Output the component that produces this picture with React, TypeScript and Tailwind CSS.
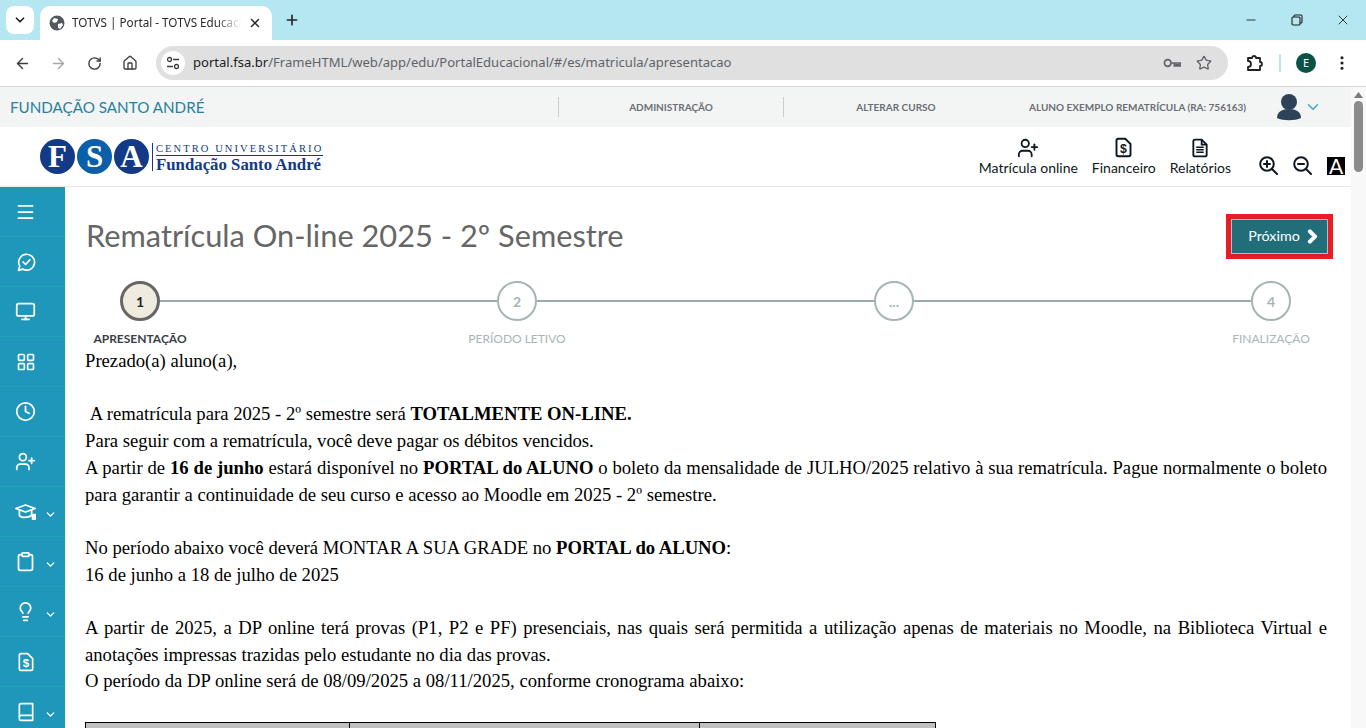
import { ArrowLeft, ArrowRight, ChevronDown, Clipboard, Clock, EllipsisVertical, House, LayoutGrid, Lightbulb, Menu, Minus, Monitor, Plus, RotateCw, Star, UserPlus, X } from 'lucide-react';
import { FaChevronRight } from 'react-icons/fa';
import type { ReactNode } from 'react';

const ui = "font-['Noto_Sans',sans-serif]";
const nun = "font-['Lato',sans-serif]";

function DollarFile({ size = 20, sw = 2 }: { size?: number; sw?: number }) {
  return (
    <svg width={size} height={size} viewBox="0 0 24 24" fill="none" stroke="currentColor" strokeWidth={sw} strokeLinejoin="round">
      <path d="M6 2h8l6 6v12a2 2 0 0 1-2 2H6a2 2 0 0 1-2-2V4a2 2 0 0 1 2-2z" />
      <text x="12" y="18" textAnchor="middle" fontSize="14" fontWeight="700" fill="currentColor" stroke="none" fontFamily="Liberation Sans">$</text>
    </svg>
  );
}

function ReportFile() {
  return (
    <svg width="20" height="20" viewBox="0 0 24 24" fill="none" stroke="currentColor" strokeWidth="2.200" strokeLinejoin="round">
      <path d="M6 2h8l6 6v12a2 2 0 0 1-2 2H6a2 2 0 0 1-2-2V4a2 2 0 0 1 2-2z" />
      <path d="M14 2v6h6" />
      <path d="M7.500 11h9M7.500 14h9M7.500 17h9" strokeWidth="1.800" />
    </svg>
  );
}

function ZoomGlass({ sign }: { sign: 'plus' | 'minus' }) {
  return (
    <svg width="19" height="19" viewBox="0 0 19 19" fill="none" stroke="currentColor" strokeWidth="2" strokeLinecap="round">
      <circle cx="8" cy="8" r="6.800" />
      <path d="M13 13l5 5" />
      <path d="M5 8h6" />
      {sign === 'plus' && <path d="M8 5v6" />}
    </svg>
  );
}

function MessageCheck() {
  return (
    <svg width="20" height="20" viewBox="0 0 24 24" fill="none" stroke="currentColor" strokeWidth="2" strokeLinecap="round" strokeLinejoin="round">
      <path d="M3 22l1.500-5A9.500 9.500 0 1 1 8 20.500z" />
      <path d="M8.500 12l3 3 5-5.500" />
    </svg>
  );
}

function GradCap() {
  return (
    <svg width="22" height="20" viewBox="0 0 24 22" fill="none" stroke="currentColor" strokeWidth="2" strokeLinejoin="round">
      <path d="M1 7l11-4 11 4-11 4z" />
      <path d="M5 9v6c2 3 10 3 14 0V9" />
      <path d="M20 14h3v5h-3z" fill="currentColor" />
    </svg>
  );
}

function SideBook() {
  return (
    <svg width="20" height="20" viewBox="0 0 24 24" fill="none" stroke="currentColor" strokeWidth="2" strokeLinejoin="round">
      <path d="M6 2h14v20H6a2 2 0 0 1-2-2V4a2 2 0 0 1 2-2z" />
      <path d="M4 18a2 2 0 0 1 2-2h14" />
    </svg>
  );
}

const sideItems: { icon: ReactNode; more?: boolean }[] = [
  { icon: <Menu size={22} strokeWidth={2} /> },
  { icon: <MessageCheck /> },
  { icon: <Monitor size={21} strokeWidth={2} /> },
  { icon: <LayoutGrid size={20} strokeWidth={2} /> },
  { icon: <Clock size={21} strokeWidth={2} /> },
  { icon: <UserPlus size={21} strokeWidth={2} /> },
  { icon: <GradCap />, more: true },
  { icon: <Clipboard size={21} strokeWidth={2} />, more: true },
  { icon: <Lightbulb size={23} strokeWidth={2} />, more: true },
  { icon: <DollarFile /> },
  { icon: <SideBook />, more: true },
];

function Sidebar() {
  return (
    <aside className="w-[65px] shrink-0 bg-[#1f97bb] text-white">
      {sideItems.map((item, i) => (
        <div key={i} className="relative flex h-[50px] items-center border-b border-[#1fa3b5] pl-[15px]">
          <span className="flex w-[21px] justify-center">{item.icon}</span>
          {item.more && <ChevronDown size={13} strokeWidth={2.500} className="absolute left-[44px] top-[21px]" />}
        </div>
      ))}
    </aside>
  );
}

function BrowserChrome() {
  return (
    <div className={`${ui} shrink-0`}>
      <div className="flex h-[40px] items-center bg-[#b5e7f3] pl-[6px]">
        <div className="flex h-[28px] w-[28px] items-center justify-center rounded-lg bg-white">
          <ChevronDown size={14} strokeWidth={3} className="text-[#1f1f1f]" />
        </div>
        <div className="ml-[6px] mt-[6px] flex h-[34px] w-[232px] items-center rounded-t-[10px] bg-white pl-[9px] pr-[10px]">
          <svg width="16" height="16" viewBox="0 0 16 16" className="shrink-0">
            <circle cx="8" cy="8" r="7.500" fill="#54595f" />
            <path d="M5 3l4 1-1 3-3 1-2-2zM9 9l4-1 1 2-3 4-2-1z" fill="#fff" />
          </svg>
          <span className="ml-[7px] w-[169px] overflow-hidden whitespace-nowrap text-[11.700px] text-[#26282b] [mask-image:linear-gradient(to_right,black_85%,transparent)]">TOTVS | Portal - TOTVS Educacional</span>
          <X size={14} strokeWidth={2.500} className="ml-auto shrink-0 text-[#26282b]" />
        </div>
        <Plus size={16} strokeWidth={2.500} className="ml-[12px] text-[#26282b]" />
        <div className="ml-auto flex items-center text-[#1f1f1f]">
          <span className="flex w-[46px] justify-center"><Minus size={14} strokeWidth={1.500} /></span>
          <span className="flex w-[46px] justify-center">
            <svg width="12" height="12" viewBox="0 0 12 12" fill="none" stroke="currentColor" strokeWidth="1.100">
              <rect x="1" y="3" width="8" height="8" rx="1" />
              <path d="M3 3V2a1 1 0 0 1 1-1h6a1 1 0 0 1 1 1v6a1 1 0 0 1-1 1H9" />
            </svg>
          </span>
          <span className="flex w-[46px] justify-center"><X size={16} strokeWidth={1.300} /></span>
        </div>
      </div>
      <div className="flex h-[47px] items-center rounded-t-[10px] border-b border-[#d4d7d9] bg-white pl-[14px]">
        <ArrowLeft size={17} strokeWidth={2} className="text-[#3b3d40]" />
        <ArrowRight size={17} strokeWidth={2} className="ml-[19px] text-[#a5a7a9]" />
        <RotateCw size={15} strokeWidth={2.200} className="ml-[20px] text-[#3b3d40]" />
        <House size={16} strokeWidth={2} className="ml-[20px] text-[#3b3d40]" />
        <div className="ml-[18px] flex h-[34px] w-[1072px] items-center rounded-full bg-[#e0e0e0] pl-[5px] pr-[16px]">
          <span className="flex h-[24px] w-[24px] items-center justify-center rounded-full bg-white">
            <svg width="14" height="14" viewBox="0 0 14 14" fill="none" stroke="#3b3d40" strokeWidth="1.300">
              <circle cx="3.500" cy="3.500" r="2" />
              <path d="M7 3.500h6M1 10.500h6" />
              <circle cx="10.500" cy="10.500" r="2" />
            </svg>
          </span>
          <span className="ml-[8px] whitespace-nowrap text-[13.050px] text-[#5f6368]">
            <span className="text-[#202124]">portal.fsa.br</span>/FrameHTML/web/app/edu/PortalEducacional/#/es/matricula/apresentacao
          </span>
          <svg width="19" height="12" viewBox="0 0 20 12" fill="none" stroke="#5f6368" strokeWidth="1.800" className="ml-auto">
            <circle cx="5" cy="6" r="3.500" />
            <path d="M9 6h9v3h-2v-1h-2v1h-2V6" />
          </svg>
          <Star size={16} strokeWidth={2} className="ml-[14px] text-[#5f6368]" />
        </div>
        <svg width="18" height="18" viewBox="0 0 18 18" fill="none" stroke="#202124" strokeWidth="1.800" strokeLinejoin="round" className="ml-[18px]">
          <path d="M2 4h4a2 2 0 0 1 4 0h4v4a2 2 0 0 1 0 4v4H2v-3a2 2 0 0 0 0-6z" />
        </svg>
        <span className="ml-[15px] h-[18px] w-[2px] bg-[#b5e7f3]" />
        <span className="ml-[15px] flex h-[20px] w-[20px] items-center justify-center rounded-full bg-[#0b5345] text-[11px] text-white">E</span>
        <EllipsisVertical size={18} strokeWidth={2.200} className="ml-[17px] text-[#202124]" />
      </div>
    </div>
  );
}

function Logo() {
  return (
    <div className="flex items-center">
      {['F', 'S', 'A'].map((l, i) => (
        <span
          key={l}
          className={`mr-[2px] flex h-[35px] w-[35px] items-center justify-center rounded-full font-['Liberation_Serif',serif] text-[31px] font-bold leading-none text-white ${i === 1 ? 'bg-[#0b5ea8]' : 'bg-[#123a86]'}`}
        >
          {l}
        </span>
      ))}
      <span className="ml-[1px] h-[28px] w-[1px] bg-[#123a86]" />
      <div className="ml-[3px] pt-[3px] font-['Liberation_Serif',serif] text-[#123a86]">
        <div className="w-[167px] whitespace-nowrap border-b border-[#123a86] text-[10.500px] leading-[12px] tracking-[2.080px]">CENTRO UNIVERSITÁRIO</div>
        <div className="whitespace-nowrap text-[16.800px] font-bold leading-[17px]">Fundação Santo André</div>
      </div>
    </div>
  );
}

function TopNav({ icon, label }: { icon: ReactNode; label: string }) {
  return (
    <div className="flex flex-col items-center text-[#0f1720]">
      <span className="flex h-[22px] items-center">{icon}</span>
      <span className="-mt-[1px] whitespace-nowrap text-[14px] leading-[20px]">{label}</span>
    </div>
  );
}

function PortalHeader() {
  return (
    <div className={`${nun} shrink-0`}>
      <div className="flex h-[40px] items-center bg-[#f3f5f5] pl-[10px]">
        <span className="w-[548px] text-[15.200px] text-[#2a7f9e]">FUNDAÇÃO SANTO ANDRÉ</span>
        <span className="h-[20px] w-[1px] bg-[#c8cccc]" />
        <span className="w-[224px] text-center text-[10px] font-bold text-[#6a6f73]">ADMINISTRAÇÃO</span>
        <span className="h-[20px] w-[1px] bg-[#c8cccc]" />
        <span className="w-[224px] text-center text-[10px] font-bold text-[#6a6f73]">ALTERAR CURSO</span>
        <span className="ml-[21px] w-[248px] whitespace-nowrap text-[10px] font-bold text-[#6a6f73]">ALUNO EXEMPLO REMATRÍCULA (RA: 756163)</span>
        <svg width="26" height="28" viewBox="0 0 26 28" fill="#2c4259" className="-ml-[1px]">
          <circle cx="13" cy="9" r="8" />
          <path d="M1 25c0-6 5-9 12-9s12 3 12 9c-6 3-18 3-24 0z" />
        </svg>
        <ChevronDown size={18} strokeWidth={1.800} className="ml-[2px] text-[#3ba5c4]" />
      </div>
      <div className="flex h-[60px] items-center border-b border-[#e6e8e8] bg-white pl-[40px]">
        <Logo />
        <div className="ml-auto mr-[6px] flex items-center">
          <div className="flex gap-[14px] pt-[1px]">
            <TopNav label="Matrícula online" icon={<UserPlus size={22} strokeWidth={2} />} />
            <TopNav label="Financeiro" icon={<DollarFile size={21} sw={2.200} />} />
            <TopNav label="Relatórios" icon={<ReportFile />} />
          </div>
          <div className="ml-[28px] flex items-center gap-[15px] pt-[18px] text-[#0f1720]">
            <ZoomGlass sign="plus" />
            <ZoomGlass sign="minus" />
            <span className="flex h-[18px] w-[18px] items-center justify-center bg-black text-[21px] leading-none text-white">A</span>
          </div>
        </div>
      </div>
    </div>
  );
}

const steps = [
  { n: '1', label: 'APRESENTAÇÃO' },
  { n: '2', label: 'PERÍODO LETIVO' },
  { n: '...', label: '' },
  { n: '4', label: 'FINALIZAÇÃO' },
];

function Stepper() {
  return (
    <div className={nun}>
      <div className="ml-[35px] mr-[36px] flex items-center">
        {steps.map((s, i) => (
          <div key={s.n} className={`flex items-center ${i < 3 ? 'flex-1' : ''}`}>
            <span
              className={`flex h-[40px] w-[40px] shrink-0 items-center justify-center rounded-full border-[2px] text-[14px] font-bold ${
                i === 0 ? 'border-[3px] border-[#666666] bg-[#f0ebdf] text-[#222222]' : 'border-[#a5b5b5] bg-white text-[#a5b5b5]'
              }`}
            >
              {s.n}
            </span>
            {i < 3 && <span className="h-[2px] flex-1 bg-[#9aabab]" />}
          </div>
        ))}
      </div>
      <div className="mt-[9px] flex justify-between pr-[1px]">
        {steps.map((s, i) => (
          <span
            key={s.n}
            className={`w-[110px] whitespace-nowrap text-center text-[12px] leading-[18px] ${i === 0 ? 'text-[12.200px] font-bold text-[#3a3f44]' : 'text-[#aab4b6]'}`}
          >
            {s.label}
          </span>
        ))}
      </div>
    </div>
  );
}

function Letter() {
  return (
    <div className="font-['Liberation_Serif',serif] text-[18.670px] leading-[26.700px] text-black">
      <p>Prezado(a) aluno(a),</p>
      <p>&nbsp;</p>
      <p>&nbsp;A rematrícula para 2025 - 2º semestre será <b>TOTALMENTE ON-LINE.</b></p>
      <p>Para seguir com a rematrícula, você deve pagar os débitos vencidos.</p>
      <p className="text-justify">
        A partir de <b>16 de junho</b> estará disponível no <b>PORTAL do ALUNO</b> o boleto da mensalidade de JULHO/2025 relativo à sua rematrícula. Pague normalmente o boleto para garantir a continuidade de seu curso e acesso ao Moodle em 2025 - 2º semestre.
      </p>
      <p>&nbsp;</p>
      <p>No período abaixo você deverá MONTAR A SUA GRADE no <b>PORTAL do ALUNO</b>:</p>
      <p>16 de junho a 18 de julho de 2025</p>
      <p>&nbsp;</p>
      <p className="text-justify">
        A partir de 2025, a DP online terá provas (P1, P2 e PF) presenciais, nas quais será permitida a utilização apenas de materiais no Moodle, na Biblioteca Virtual e anotações impressas trazidas pelo estudante no dia das provas.
      </p>
      <p>O período da DP online será de 08/09/2025 a 08/11/2025, conforme cronograma abaixo:</p>
      <table className="mt-[27px] w-[851px] table-fixed border-collapse">
        <tbody>
          <tr className="h-[40px] bg-[#c0c0c0]">
            <td className="w-[264px] border border-black" />
            <td className="w-[350px] border border-black" />
            <td className="border border-black" />
          </tr>
        </tbody>
      </table>
    </div>
  );
}

function Scrollbar() {
  return (
    <div className="flex w-[15px] shrink-0 flex-col items-center bg-[#f8f8f8]">
      <svg width="9" height="6" viewBox="0 0 9 6" fill="#7a7a7a" className="mt-[5px]">
        <path d="M4.500 0L9 6H0z" />
      </svg>
      <div className="mt-[3px] h-[71px] w-[9px] rounded-full bg-[#8b8b8b]" />
    </div>
  );
}

export default function App() {
  return (
    <div className="flex h-[728px] w-[1366px] flex-col overflow-hidden bg-white">
      <BrowserChrome />
      <div className="flex min-h-0 flex-1">
        <div className="flex min-w-0 flex-1 flex-col">
          <PortalHeader />
          <div className="flex min-h-0 flex-1">
            <Sidebar />
            <main className="min-w-0 flex-1 pl-[20px] pr-[24px]">
              <div className="flex h-[94px] items-start justify-between">
                <h1 className={`${nun} mt-[29px] pl-[1px] text-[30.750px] leading-[40px] text-[#666666]`}>Rematrícula On-line 2025 - 2º Semestre</h1>
                <div className="-mr-[6px] mt-[27px] border-[5px] border-[#ed1c24]">
                  <button className={`${nun} flex h-[35px] w-[97px] items-center justify-center gap-[5px] border border-[#9cc] bg-[#216e7a] pb-[1px] pl-[9px] text-[14.300px] text-white shadow-sm`}>
                    Próximo <FaChevronRight size={15} className="[stroke-width:60] stroke-white" />
                  </button>
                </div>
              </div>
              <Stepper />
              <Letter />
            </main>
          </div>
        </div>
        <Scrollbar />
      </div>
    </div>
  );
}
